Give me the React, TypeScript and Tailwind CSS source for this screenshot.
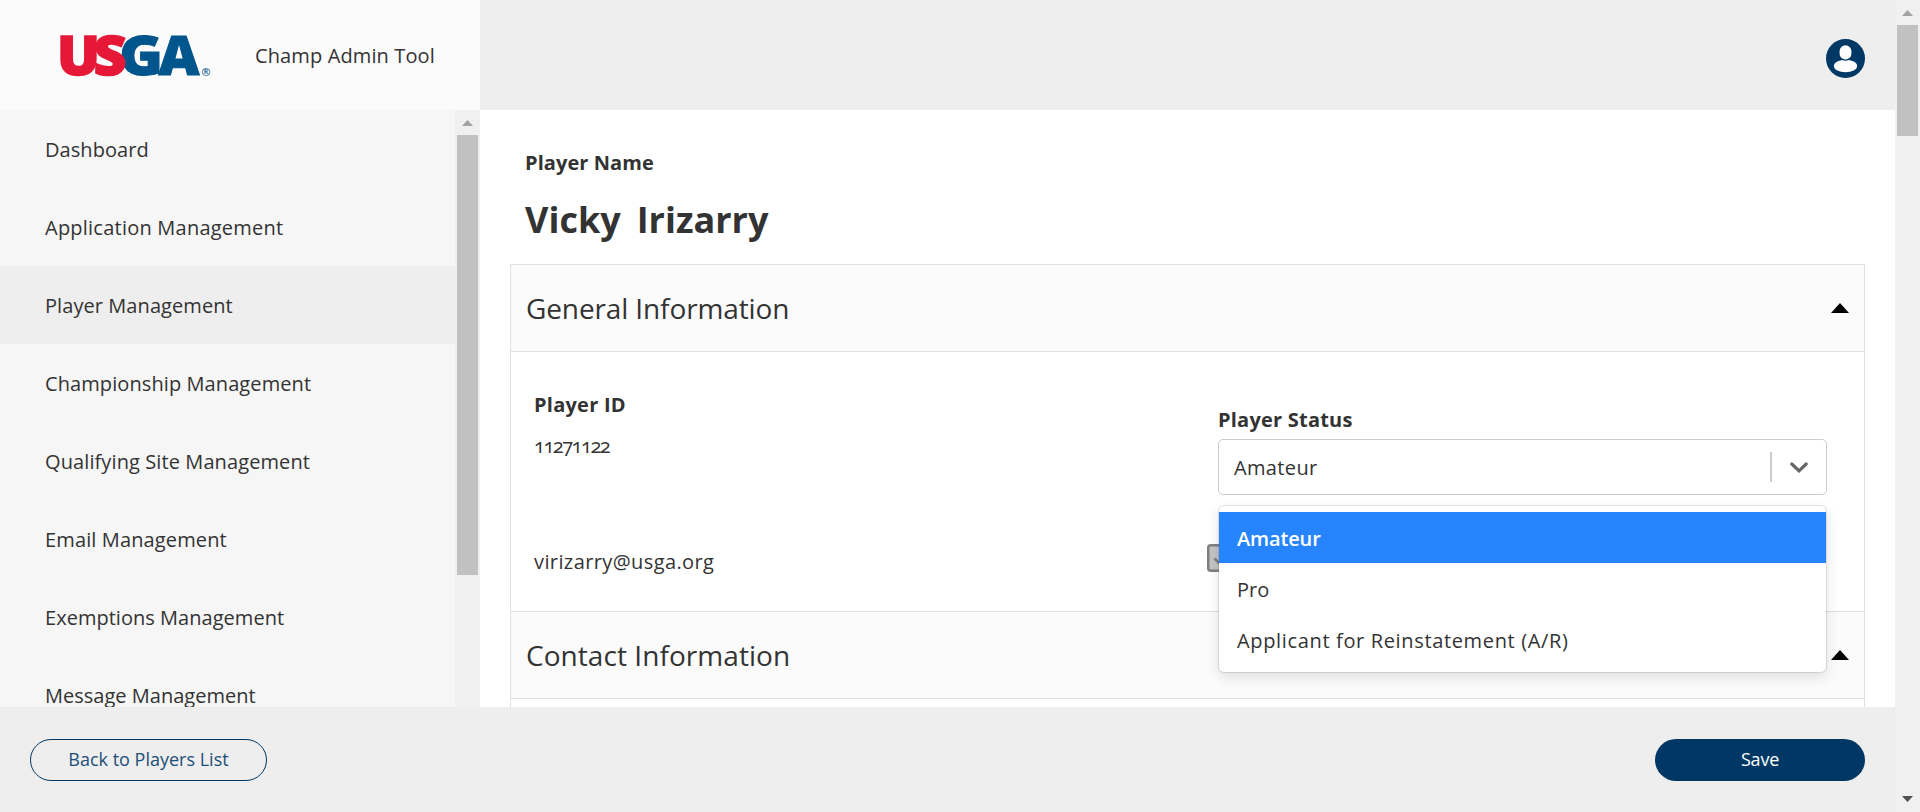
import { useState } from "react";

const navItems = [
  { label: "Dashboard", spacing: "tracking-[0.07px]" },
  { label: "Application Management", spacing: "tracking-[0.23px]" },
  { label: "Player Management", spacing: "tracking-[0.07px]" },
  { label: "Championship Management", spacing: "tracking-[0.09px]" },
  { label: "Qualifying Site Management", spacing: "tracking-[0.1px]" },
  { label: "Email Management", spacing: "tracking-[0.13px]" },
  { label: "Exemptions Management", spacing: "tracking-[0.03px]" },
  { label: "Message Management", spacing: "tracking-[0.01px]" },
];

const statuses = [
  { label: "Amateur", spacing: "tracking-[-0.15px]" },
  { label: "Pro", spacing: "tracking-normal" },
  { label: "Applicant for Reinstatement (A/R)", spacing: "tracking-[0.65px]" },
];

function UsgaLogo() {
  return (
    <svg className="block h-[44px] w-[152px] overflow-visible" viewBox="60 33 152 44" aria-label="USGA">
      <g fontFamily="'Open Sans', sans-serif" fontWeight="800" fontSize="55">
        <g fill="#00558c" stroke="#00558c" strokeWidth="1">
          <text x="119" y="75" textLength="44" lengthAdjust="spacingAndGlyphs">G</text>
          <text x="158.5" y="75" textLength="41" lengthAdjust="spacingAndGlyphs">A</text>
        </g>
        <g fill="#e51937" stroke="#e51937" strokeWidth="1.6">
          <text x="57" y="75" textLength="43" lengthAdjust="spacingAndGlyphs">U</text>
          <text x="93.5" y="75" textLength="33" lengthAdjust="spacingAndGlyphs">S</text>
        </g>
      </g>
      <text x="201.4" y="75.6" fontFamily="'Open Sans', sans-serif" fontSize="10.5" fontWeight="600" fill="#00558c" textLength="9" lengthAdjust="spacingAndGlyphs">®</text>
    </svg>
  );
}

function UserAvatar() {
  return (
    <svg className="block size-[39px]" viewBox="0 0 39 39" aria-label="Account">
      <circle cx="19.5" cy="19.5" r="19.5" fill="#003865" />
      <ellipse cx="19.5" cy="27" rx="11.6" ry="6.2" fill="#fff" />
      <rect x="12.6" y="5.2" width="13.8" height="16.6" rx="6.9" fill="#003865" />
      <rect x="13.6" y="6.2" width="11.8" height="14.4" rx="5.9" fill="#fff" />
    </svg>
  );
}

function ScrollArrow({ down = false, className }: { down?: boolean; className: string }) {
  return (
    <svg className={`block h-[6px] w-[11px] ${className}`} viewBox="0 0 11 6">
      <path d={down ? "M0 0h11L5.5 6z" : "M0 6h11L5.5 0z"} fill="currentColor" />
    </svg>
  );
}

function SectionHeader({ title, spacing }: { title: string; spacing: string }) {
  return (
    <div className="flex h-[87px] shrink-0 items-center justify-between border-b border-[#e0e0e0] bg-[#fbfbfb] pr-[15px] pl-[15px]">
      <h2 className={`text-[28px] leading-none whitespace-nowrap ${spacing}`}>{title}</h2>
      <svg className="h-[10px] w-[18px]" viewBox="0 0 18 10">
        <path d="M0 10L9 0l9 10z" fill="#000" />
      </svg>
    </div>
  );
}

function StatusSelect() {
  const [value, setValue] = useState("Amateur");
  return (
    <div className="relative w-[609px]">
      <div className="flex h-[56px] items-center justify-between rounded-[5px] border border-[#ccc] bg-white pl-[15px]">
        <span className="pt-[2px] tracking-[0.35px]">{value}</span>
        <div className="flex h-[30px] items-center border-l-2 border-[#ccc] pr-[18px] pl-[18px]">
          <svg className="h-[11px] w-[18px]" viewBox="0 0 18 11">
            <path d="M1.8 2l7.2 6.8L16.2 2" fill="none" stroke="#666" strokeWidth="3.2" strokeLinecap="round" />
          </svg>
        </div>
      </div>
      <ul className="absolute top-[67px] left-px z-10 w-[607px] rounded-[5px] bg-white py-[6px] shadow-[0_0_0_1px_rgba(0,0,0,0.1),0_5px_14px_rgba(0,0,0,0.12)]">
        {statuses.map((s) => (
          <li
            key={s.label}
            onClick={() => setValue(s.label)}
            className={`flex h-[51.2px] items-center px-[18px] pt-[2px] ${s.spacing} ${
              s.label === value ? "bg-[#2684ff] font-semibold text-white" : ""
            }`}
          >
            {s.label}
          </li>
        ))}
      </ul>
    </div>
  );
}

export default function App() {
  return (
    <div className="flex h-[812px] w-[1920px] overflow-hidden bg-white font-['Open_Sans','Noto_Sans',sans-serif] text-[20px] leading-none text-[#333]">
      <div className="flex w-[1895px] flex-col">
        <header className="flex h-[110px] shrink-0 bg-[#eee]">
          <div className="flex w-[480px] items-center bg-[#fbfbfb] pl-[60px]">
            <UsgaLogo />
            <span className="ml-[43px] pt-[2px] tracking-[0.12px]">Champ Admin Tool</span>
          </div>
          <div className="flex flex-1 items-center justify-end pt-[7px] pr-[30px]">
            <UserAvatar />
          </div>
        </header>

        <div className="flex h-[597px] shrink-0 overflow-hidden">
          <aside className="flex w-[480px] shrink-0">
            <nav className="w-[455px] bg-[#f6f6f6]">
              {navItems.map((item) => (
                <a
                  key={item.label}
                  className={`flex h-[78px] items-center pt-[2px] pl-[45px] whitespace-nowrap ${item.spacing} ${
                    item.label === "Player Management" ? "bg-[#eee]" : ""
                  }`}
                >
                  {item.label}
                </a>
              ))}
            </nav>
            <div className="flex w-[25px] flex-col items-center bg-[#f0f0f0] pt-[10px]">
              <ScrollArrow className="text-[#a3a3a3]" />
              <div className="mt-[9px] h-[440px] w-[21px] bg-[#c1c1c1]" />
            </div>
          </aside>

          <main className="flex flex-1 flex-col pr-[30px] pl-[30px]">
            <div className="flex h-[154px] shrink-0 flex-col pl-[15px]">
              <div className="mt-[43px] font-bold tracking-[0.08px]">Player Name</div>
              <h1 className="mt-[29px] flex gap-[16px] text-[36px] leading-none font-bold">
                <span>Vicky</span>
                <span>Irizarry</span>
              </h1>
            </div>
            <div className="flex flex-1 flex-col border-x border-t border-[#e0e0e0]">
              <SectionHeader title="General Information" spacing="tracking-[-0.12px]" />
              <div className="flex h-[260px] shrink-0 border-b border-[#e0e0e0] pl-[23px]">
                <div className="flex w-[672px] flex-col">
                  <div className="mt-[43px] font-bold tracking-[0.25px]">Player ID</div>
                  <div className="mt-[21px] tracking-[-1.5px] oldstyle-nums">11271122</div>
                  <div className="mt-[96px] tracking-[0.4px]">virizarry@usga.org</div>
                </div>
                <div className="relative flex flex-col pl-[12px]">
                  <div className="mt-[58px] mb-[9px] font-bold tracking-[0.22px]">Player Status</div>
                  <StatusSelect />
                  <svg className="mt-[49px] ml-[-11px] block size-[28px]" viewBox="0 0 28 28">
                    <rect x="1.25" y="1.25" width="25.5" height="25.5" rx="2.5" fill="#c4c4c4" stroke="#808080" strokeWidth="2.5" />
                    <path d="M7.5 14.5l5 5 9-11" fill="none" stroke="#808080" strokeWidth="2.8" />
                  </svg>
                </div>
              </div>
              <SectionHeader title="Contact Information" spacing="tracking-[0.06px]" />
            </div>
          </main>
        </div>

        <footer className="flex h-[105px] shrink-0 items-center justify-between bg-[#eee] pr-[30px] pl-[30px] text-[18px]">
          <button className="h-[42px] w-[237px] rounded-full border border-[#003865] pb-[2px] leading-none text-[#1d4f78]">
            Back to Players List
          </button>
          <button className="h-[42px] w-[210px] rounded-full bg-[#003865] pb-[2px] leading-none font-medium tracking-[-0.2px] text-white">
            Save
          </button>
        </footer>
      </div>

      <div className="flex w-[25px] flex-col items-center bg-[#f0f0f0] py-[10px]">
        <ScrollArrow className="text-[#a3a3a3]" />
        <div className="mt-[9px] h-[111px] w-[21px] bg-[#c1c1c1]" />
        <ScrollArrow down className="mt-auto text-[#505050]" />
      </div>
    </div>
  );
}
